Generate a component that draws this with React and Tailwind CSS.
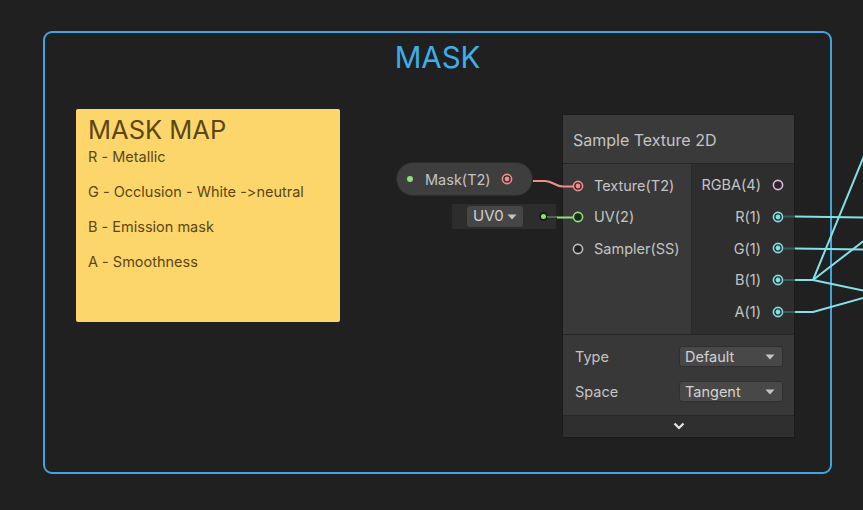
import React from "react";

function Port({ color, connected = true, hollowFill = "#2a2a2a" }) {
  return (
    <svg width="12" height="12" viewBox="0 0 12 12" className="shrink-0">
      <circle cx="6" cy="6" r="4.6" fill={hollowFill} stroke={color} strokeWidth="1.6" />
      {connected && <circle cx="6" cy="6" r="2.4" fill={color} />}
    </svg>
  );
}

function Tri() {
  return (
    <svg width="10" height="6" viewBox="0 0 10 6">
      <path d="M0.5 0.5 L9.5 0.5 L5 5.5 Z" fill="#c4c4c4" />
    </svg>
  );
}

function Dropdown({ label }) {
  return (
    <div className="flex h-[21px] w-[104px] items-center justify-between rounded-[3px] border border-[#2f2f2f] bg-[#484848] pl-[5px] pr-[7px] text-[14.5px] text-[#d2d2d2]">
      <span>{label}</span>
      <Tri />
    </div>
  );
}

export default function App() {
  const font = { fontFamily: "Inter, 'Noto Sans', sans-serif" };
  return (
    <div
      className="relative h-[510px] w-[863px] overflow-hidden bg-[#202020] [font-variant-ligatures:none] [font-feature-settings:'calt'_0]"
      style={font}
    >
      {/* Group */}
      <div className="absolute left-[43px] top-[31px] h-[443px] w-[789px] rounded-[9px] border-2 border-[#3ea6df]">
        <div className="flex justify-center pt-[4px] text-[29.5px] leading-[40px] text-[#3eaee9]">MASK</div>
      </div>

      {/* Sticky note */}
      <div className="absolute left-[76px] top-[109px] flex h-[213px] w-[264px] flex-col rounded-[2px] bg-[#fdd66b] px-[12px] pt-[5px] text-[#5b4714]">
        <div className="text-[25.5px] leading-[32px]">MASK MAP</div>
        <div className="mt-[2px] flex flex-col gap-[18px] text-[14.5px] leading-[17px]">
          <div>R - Metallic</div>
          <div>G - Occlusion - White -&gt;neutral</div>
          <div>B - Emission mask</div>
          <div>A - Smoothness</div>
        </div>
      </div>

      {/* Property node */}
      <div className="absolute left-[396px] top-[162px] flex h-[34px] w-[137px] items-center rounded-full border border-[#2c2c2c] bg-[#3e3e3e] pl-[10px] pr-[19px] text-[14.5px] text-[#c4c4c4]">
        <div className="h-[6px] w-[6px] rounded-full bg-[#8fe07a]" />
        <span className="ml-[12px] flex-1 pt-[1px]">Mask(T2)</span>
        <Port color="#f08c8c" />
      </div>

      {/* UV0 inline */}
      <div className="absolute left-[452px] top-[204px] flex h-[25px] w-[104px] items-center bg-[#2d2d2d] pl-[15px] pr-[8px]">
        <div className="flex h-[21px] w-[56px] items-center justify-between rounded-[3px] bg-[#464646] pl-[6px] pr-[6px] text-[15px] text-[#d0d0d0]">
          <span>UV0</span>
          <Tri />
        </div>
        <div className="ml-auto h-[9px] w-[9px] rounded-full border-2 border-[#1c1c1c] bg-[#8fe07a]" />
      </div>

      {/* Sample Texture 2D node */}
      <div className="absolute left-[563px] top-[115px] flex w-[231px] flex-col bg-[#383838] text-[#c4c4c4] shadow-[0_0_0_1px_#1b1b1b]">
        <div className="flex h-[48px] items-center bg-[#3a3a3a] pl-[10px] pt-[1px] text-[16px]">Sample Texture 2D</div>
        <div className="h-[1px] bg-[#262626]" />
        <div className="flex h-[170px]">
          <div className="flex w-[128px] flex-col bg-[#393939] pt-[6px] text-[14.5px]">
            <div className="flex h-[31.5px] items-center gap-[10px] pl-[9px]">
              <Port color="#f08c8c" hollowFill="#3a2a2a" />
              <span>Texture(T2)</span>
            </div>
            <div className="flex h-[31.5px] items-center gap-[10px] pl-[9px]">
              <Port color="#8fe07a" connected={false} hollowFill="#1e2a1e" />
              <span>UV(2)</span>
            </div>
            <div className="flex h-[31.5px] items-center gap-[10px] pl-[9px]">
              <Port color="#bdbdbd" connected={false} hollowFill="#222222" />
              <span>Sampler(SS)</span>
            </div>
          </div>
          <div className="w-[1px] bg-[#2a2a2a]" />
          <div className="flex flex-1 flex-col bg-[#2e2e2e] pt-[5px] text-[14.5px]">
            <div className="flex h-[31.75px] items-center justify-end gap-[11px] pr-[10px]">
              <span>RGBA(4)</span>
              <Port color="#e6b4e0" connected={false} hollowFill="#262626" />
            </div>
            {["R(1)", "G(1)", "B(1)", "A(1)"].map((l) => (
              <div key={l} className="flex h-[31.75px] items-center justify-end gap-[11px] pr-[10px]">
                <span>{l}</span>
                <Port color="#84dde3" hollowFill="#263435" />
              </div>
            ))}
          </div>
        </div>
        <div className="h-[1px] bg-[#262626]" />
        <div className="flex flex-col gap-[13px] bg-[#383838] pb-[12px] pl-[12px] pr-[11px] pt-[11px] text-[14.5px]">
          <div className="flex items-center justify-between">
            <span>Type</span>
            <Dropdown label="Default" />
          </div>
          <div className="flex items-center justify-between">
            <span>Space</span>
            <Dropdown label="Tangent" />
          </div>
        </div>
        <div className="h-[1px] bg-[#262626]" />
        <div className="flex h-[21px] items-center justify-center bg-[#2f2f2f]">
          <svg width="12" height="8" viewBox="0 0 12 8">
            <path d="M1.5 1.5 L6 6 L10.5 1.5" fill="none" stroke="#e6e6e6" strokeWidth="2.2" />
          </svg>
        </div>
      </div>

      {/* Wires */}
      <svg className="pointer-events-none absolute left-0 top-0" width="863" height="510" viewBox="0 0 863 510">
        <path d="M533 181 L545 181 C553 181 555 186.5 563 186.5 L573 186.5" fill="none" stroke="#f08c8c" strokeWidth="2" />
        <path d="M547 217 L557 217" stroke="#4a6a44" strokeWidth="2" />
        <path d="M557 217.5 L573 217.5" stroke="#8fe07a" strokeWidth="2" />
        {[216.5, 248.5, 280, 312].map((y) => (
          <path key={y} d={`M784 ${y} L795 ${y}`} stroke="#3a5c5e" strokeWidth="2" />
        ))}
        <g fill="none" stroke="#84e1e8" strokeWidth="2" strokeLinejoin="round">
          <path d="M795 216.5 L870 217.5" />
          <path d="M795 248.5 L870 249.5" />
          <path d="M795 280 L813 280 L880 117" />
          <path d="M813 280 L870 236" />
          <path d="M813 280 L870 292" />
          <path d="M795 312 L813 312 L870 296" />
        </g>
      </svg>
    </div>
  );
}
